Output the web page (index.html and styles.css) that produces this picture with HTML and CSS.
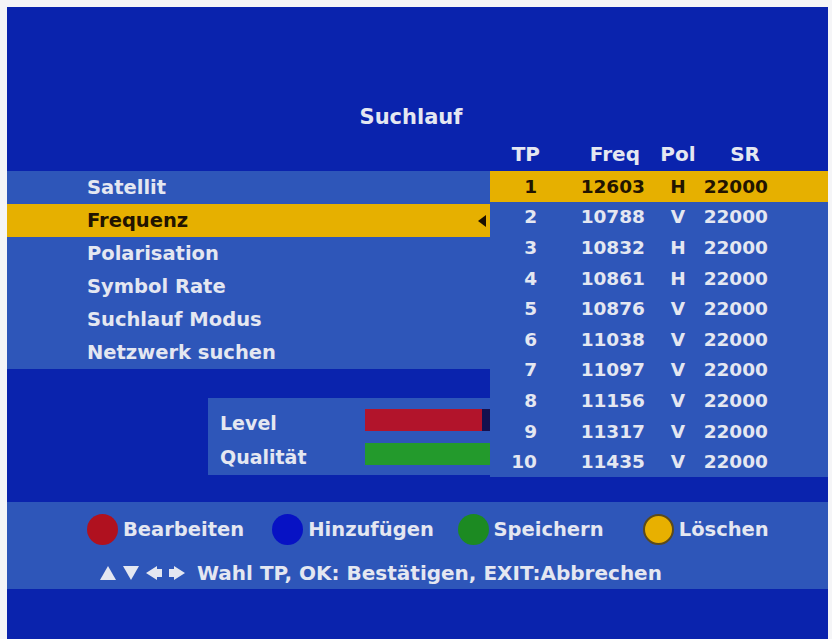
FILE: index.html
```html
<!DOCTYPE html>
<html lang="de">
<head>
<meta charset="utf-8">
<title>Suchlauf</title>
<link rel="stylesheet" href="styles.css">
</head>
<body>
<div class="screen">
  <div class="title">Suchlauf</div>
  <div class="main">
    <div class="left">
      <div class="menu">
        <div class="menu-item">Satellit</div>
        <div class="menu-item active">Frequenz<span class="pointer"></span></div>
        <div class="menu-item">Polarisation</div>
        <div class="menu-item">Symbol Rate</div>
        <div class="menu-item">Suchlauf Modus</div>
        <div class="menu-item">Netzwerk suchen</div>
      </div>
      <div class="levels">
        <div class="label">Level</div>
        <div class="bar level"></div>
        <div class="label">Qualität</div>
        <div class="bar quality"></div>
      </div>
    </div>
    <div class="right">
      <div class="tp-head">
        <span class="c1">TP</span><span class="c2">Freq</span><span class="c3">Pol</span><span class="c4">SR</span>
      </div>
      <div class="table">
        <div class="row active"><span class="c1">1</span><span class="c2">12603</span><span class="c3">H</span><span class="c4">22000</span></div>
        <div class="row"><span class="c1">2</span><span class="c2">10788</span><span class="c3">V</span><span class="c4">22000</span></div>
        <div class="row"><span class="c1">3</span><span class="c2">10832</span><span class="c3">H</span><span class="c4">22000</span></div>
        <div class="row"><span class="c1">4</span><span class="c2">10861</span><span class="c3">H</span><span class="c4">22000</span></div>
        <div class="row"><span class="c1">5</span><span class="c2">10876</span><span class="c3">V</span><span class="c4">22000</span></div>
        <div class="row"><span class="c1">6</span><span class="c2">11038</span><span class="c3">V</span><span class="c4">22000</span></div>
        <div class="row"><span class="c1">7</span><span class="c2">11097</span><span class="c3">V</span><span class="c4">22000</span></div>
        <div class="row"><span class="c1">8</span><span class="c2">11156</span><span class="c3">V</span><span class="c4">22000</span></div>
        <div class="row"><span class="c1">9</span><span class="c2">11317</span><span class="c3">V</span><span class="c4">22000</span></div>
        <div class="row"><span class="c1">10</span><span class="c2">11435</span><span class="c3">V</span><span class="c4">22000</span></div>
      </div>
    </div>
  </div>
  <div class="bottom">
    <div class="keys">
      <div class="key"><span class="dot red"></span>Bearbeiten</div>
      <div class="key"><span class="dot blue"></span>Hinzufügen</div>
      <div class="key"><span class="dot green"></span>Speichern</div>
      <div class="key"><span class="dot yellow"></span>Löschen</div>
    </div>
    <div class="help">
      <span class="arrows">
        <svg class="arrow" viewBox="0 0 16 14" aria-label="hoch"><polygon points="8,0 16,14 0,14"/></svg>
        <svg class="arrow" viewBox="0 0 16 14" aria-label="runter"><polygon points="0,0 16,0 8,14"/></svg>
        <svg class="arrow" viewBox="0 0 16 14" aria-label="links"><polygon points="0,7 11,0 11,3 16,3 16,11 11,11 11,14"/></svg>
        <svg class="arrow" viewBox="0 0 16 14" aria-label="rechts"><polygon points="16,7 5,0 5,3 0,3 0,11 5,11 5,14"/></svg>
      </span>
      <span>Wahl TP, OK: Bestätigen, EXIT:Abbrechen</span>
    </div>
  </div>
</div>
</body>
</html>
```

FILE: styles.css
```css
html, body {
  margin: 0;
  padding: 0;
  background: #f5f5f7;
}

body {
  font-family: "DejaVu Sans", "Liberation Sans", sans-serif;
  font-weight: bold;
}

.screen {
  margin: 7px 4px 0 7px;
  height: 632px;
  background: #0a23ad;
  color: #e4e7f1;
  display: flex;
  flex-direction: column;
}

.title {
  height: 130px;
  box-sizing: border-box;
  padding: 97px 13px 0 0;
  text-align: center;
  font-size: 21px;
  line-height: 26px;
}

.main {
  display: grid;
  grid-template-columns: 483px 338px;
}

.left {
  padding-top: 34px;
}

.menu {
  background: #2e56b9;
}

.menu-item {
  position: relative;
  height: 33px;
  line-height: 33px;
  padding-left: 80px;
  font-size: 19.5px;
}

.menu-item.active {
  background: #e6b000;
  color: #221400;
}

.pointer {
  position: absolute;
  right: 4px;
  top: 11px;
  width: 0;
  height: 0;
  border-top: 6px solid transparent;
  border-bottom: 6px solid transparent;
  border-right: 8px solid #1c1000;
}

.levels {
  margin: 29px 0 0 201px;
  background: #2e56b9;
  padding: 11px 0 10px 12px;
  display: grid;
  grid-template-columns: 145px 1fr;
  row-gap: 12px;
  align-items: center;
}

.label {
  font-size: 19px;
  line-height: 22px;
  position: relative;
  top: 3px;
}

.bar {
  height: 22px;
}

.bar.level {
  background: linear-gradient(to right, #b2142b 0, #b2142b calc(100% - 8px), #15114f calc(100% - 8px));
}

.bar.quality {
  background: #239a2c;
}

.tp-head,
.row {
  display: grid;
  grid-template-columns: 47px 108px 10px 46px 67px;
  align-items: center;
}

.tp-head {
  height: 34px;
  font-size: 20px;
}

.c1 { grid-column: 1; text-align: right; }
.c2 { grid-column: 2; text-align: right; }
.c3 { grid-column: 4; text-align: center; }
.c4 { grid-column: 5; text-align: right; }

.tp-head .c1 { margin-right: -3px; }
.tp-head .c2 { margin-right: 5px; }
.tp-head .c4 { margin-right: 8px; }

.table {
  background: #2e56b9;
}

.row {
  height: 30.6px;
  font-size: 18.5px;
}

.row.active {
  background: #e6b000;
  color: #221400;
}

.bottom {
  margin-top: 25px;
  height: 87px;
  box-sizing: border-box;
  background: #2e56b9;
  padding: 12px 0 0 80px;
}

.keys {
  display: flex;
}

.key {
  width: 187px;
  display: flex;
  align-items: center;
  gap: 5px;
  font-size: 19.5px;
  height: 31px;
}

.dot {
  width: 31px;
  height: 31px;
  border-radius: 50%;
  flex: none;
  box-sizing: border-box;
}

.dot.red { background: #b0111f; }
.dot.blue { background: #0712c4; }
.dot.green { background: #1c8a22; }
.dot.yellow { background: #e8b000; border: 2px solid #5b4a1c; }

.help {
  margin-top: 16px;
  padding-left: 13px;
  font-size: 20px;
  line-height: 24px;
  display: flex;
  align-items: center;
  gap: 12px;
  white-space: nowrap;
}

.arrows {
  display: inline-flex;
  align-items: center;
  gap: 7px;
}

.arrow {
  width: 16px;
  height: 14px;
  fill: #e4e7f1;
}
```
